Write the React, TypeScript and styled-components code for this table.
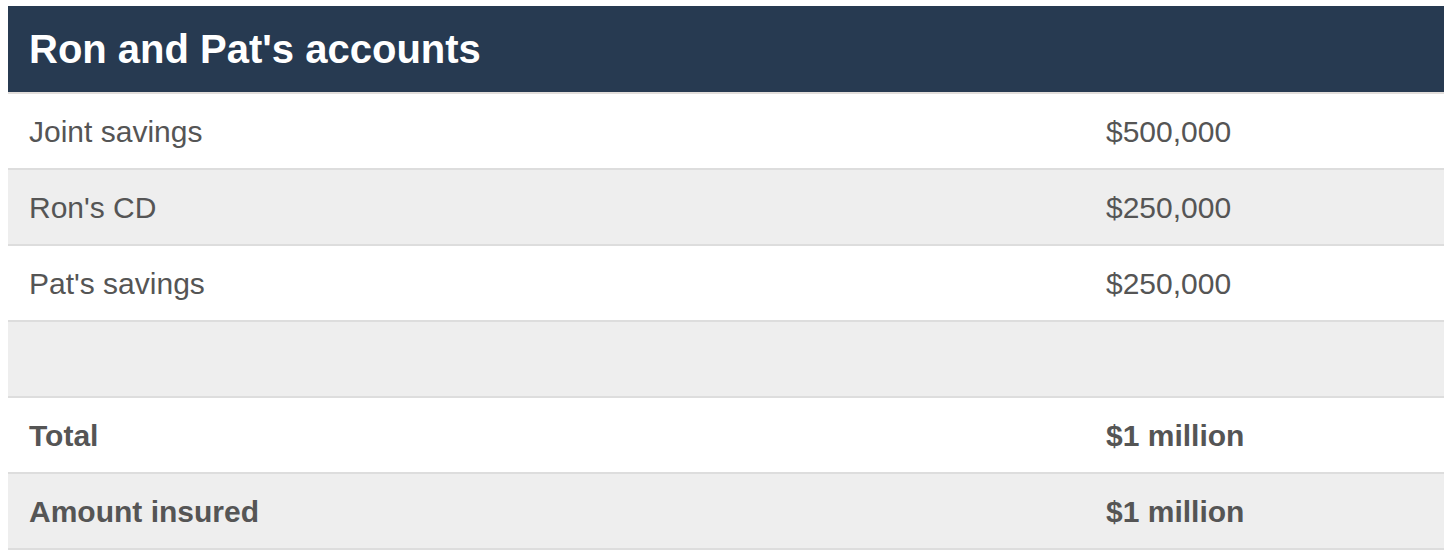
import styled, { createGlobalStyle } from 'styled-components'

const GlobalStyle = createGlobalStyle`
  body {
    margin: 0;
    background: #ffffff;
    font-family: 'Liberation Sans', Arial, Helvetica, sans-serif;
  }
`

const Page = styled.div`
  padding: 6px 6px 0 8px;
`

const Table = styled.div`
  display: flex;
  flex-direction: column;
  width: 100%;
`

const Header = styled.div`
  background: #273a51;
  color: #ffffff;
  height: 86px;
  display: flex;
  align-items: center;
  padding: 0 21px;
  border-bottom: 2px solid #e2dedb;
  box-sizing: content-box;
`

const Title = styled.h2`
  margin: 0;
  font-size: 40px;
  font-weight: 700;
  line-height: 1;
`

const Row = styled.div<{ $shade: boolean }>`
  display: grid;
  grid-template-columns: 3fr 1fr;
  height: 74px;
  background: ${props => (props.$shade ? '#eeeeee' : '#ffffff')};
  border-bottom: 2px solid #dddddd;
`

const Cell = styled.div<{ $bold?: boolean }>`
  display: flex;
  align-items: center;
  padding: 1px 21px 0;
  color: #555555;
  font-size: 30px;
  font-weight: ${props => (props.$bold ? 700 : 400)};
`

const rows = [
  { label: 'Joint savings', amount: '$500,000' },
  { label: "Ron's CD", amount: '$250,000' },
  { label: "Pat's savings", amount: '$250,000' },
  { label: '', amount: '' },
  { label: 'Total', amount: '$1 million', bold: true },
  { label: 'Amount insured', amount: '$1 million', bold: true },
]

function App() {
  return (
    <Page>
      <GlobalStyle />
      <Table>
        <Header>
          <Title>Ron and Pat's accounts</Title>
        </Header>
        {rows.map((r, i) => (
          <Row key={i} $shade={i % 2 === 1}>
            <Cell $bold={r.bold}>{r.label}</Cell>
            <Cell $bold={r.bold}>{r.amount}</Cell>
          </Row>
        ))}
      </Table>
    </Page>
  )
}

export default App
